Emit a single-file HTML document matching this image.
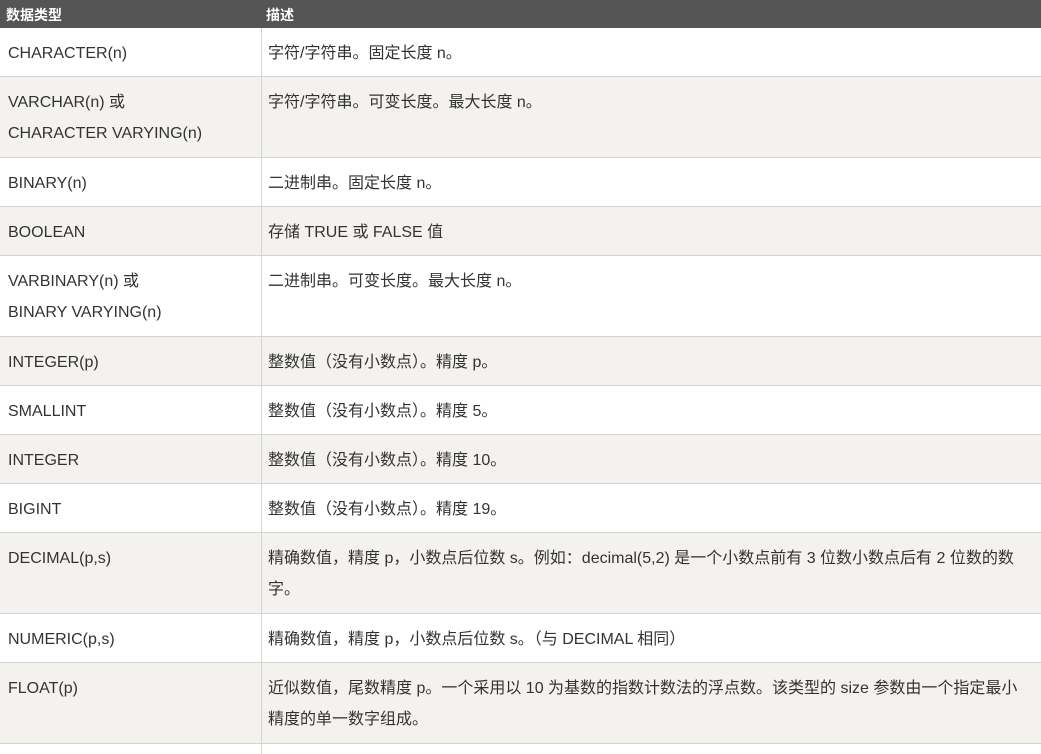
<!DOCTYPE html>
<html><head><meta charset="utf-8"><style>
body{margin:0;width:1041px;height:747px;overflow:hidden;background:#fff;font-family:"Liberation Sans","Noto Sans CJK SC",sans-serif;font-size:16px;color:#333}
.r{position:absolute;left:0;width:1041px;border-bottom:1px solid #d4d4d4;box-sizing:border-box}
.r.g{background:#f4f2ef}
.c1,.c2{position:absolute;top:0;bottom:0;padding-top:10px;line-height:31px;box-sizing:border-box}
.c1{left:0;width:262px;padding-left:8px;border-right:1px solid #d4d4d4}
.c2{left:262px;right:0;padding-left:6px;padding-right:8px}
.h{position:absolute;top:0;left:0;width:1041px;height:28px;background:#555;color:#fff;font-weight:bold;font-size:14px;line-height:30px}
.h span{position:absolute}
</style></head><body>
<div class="h"><span style="left:6px">数据类型</span><span style="left:266px">描述</span></div>
<div class="r" style="top:28px;height:49px"><div class="c1">CHARACTER(n)</div><div class="c2">字符/字符串。固定长度 n。</div></div>
<div class="r g" style="top:77px;height:81px"><div class="c1">VARCHAR(n) 或<br>CHARACTER VARYING(n)</div><div class="c2">字符/字符串。可变长度。最大长度 n。</div></div>
<div class="r" style="top:158px;height:49px"><div class="c1">BINARY(n)</div><div class="c2">二进制串。固定长度 n。</div></div>
<div class="r g" style="top:207px;height:49px"><div class="c1">BOOLEAN</div><div class="c2">存储 TRUE 或 FALSE 值</div></div>
<div class="r" style="top:256px;height:81px"><div class="c1">VARBINARY(n) 或<br>BINARY VARYING(n)</div><div class="c2">二进制串。可变长度。最大长度 n。</div></div>
<div class="r g" style="top:337px;height:49px"><div class="c1">INTEGER(p)</div><div class="c2">整数值（没有小数点）。精度 p。</div></div>
<div class="r" style="top:386px;height:49px"><div class="c1">SMALLINT</div><div class="c2">整数值（没有小数点）。精度 5。</div></div>
<div class="r g" style="top:435px;height:49px"><div class="c1">INTEGER</div><div class="c2">整数值（没有小数点）。精度 10。</div></div>
<div class="r" style="top:484px;height:49px"><div class="c1">BIGINT</div><div class="c2">整数值（没有小数点）。精度 19。</div></div>
<div class="r g" style="top:533px;height:81px"><div class="c1">DECIMAL(p,s)</div><div class="c2">精确数值，精度 p，小数点后位数 s。例如：decimal(5,2) 是一个小数点前有 3 位数小数点后有 2 位数的数字。</div></div>
<div class="r" style="top:614px;height:49px"><div class="c1">NUMERIC(p,s)</div><div class="c2">精确数值，精度 p，小数点后位数 s。（与 DECIMAL 相同）</div></div>
<div class="r g" style="top:663px;height:81px"><div class="c1">FLOAT(p)</div><div class="c2">近似数值，尾数精度 p。一个采用以 10 为基数的指数计数法的浮点数。该类型的 size 参数由一个指定最小精度的单一数字组成。</div></div>
<div class="r" style="top:744px;height:10px;border:none"><div class="c1" style="padding:0"></div></div>
</body></html>
